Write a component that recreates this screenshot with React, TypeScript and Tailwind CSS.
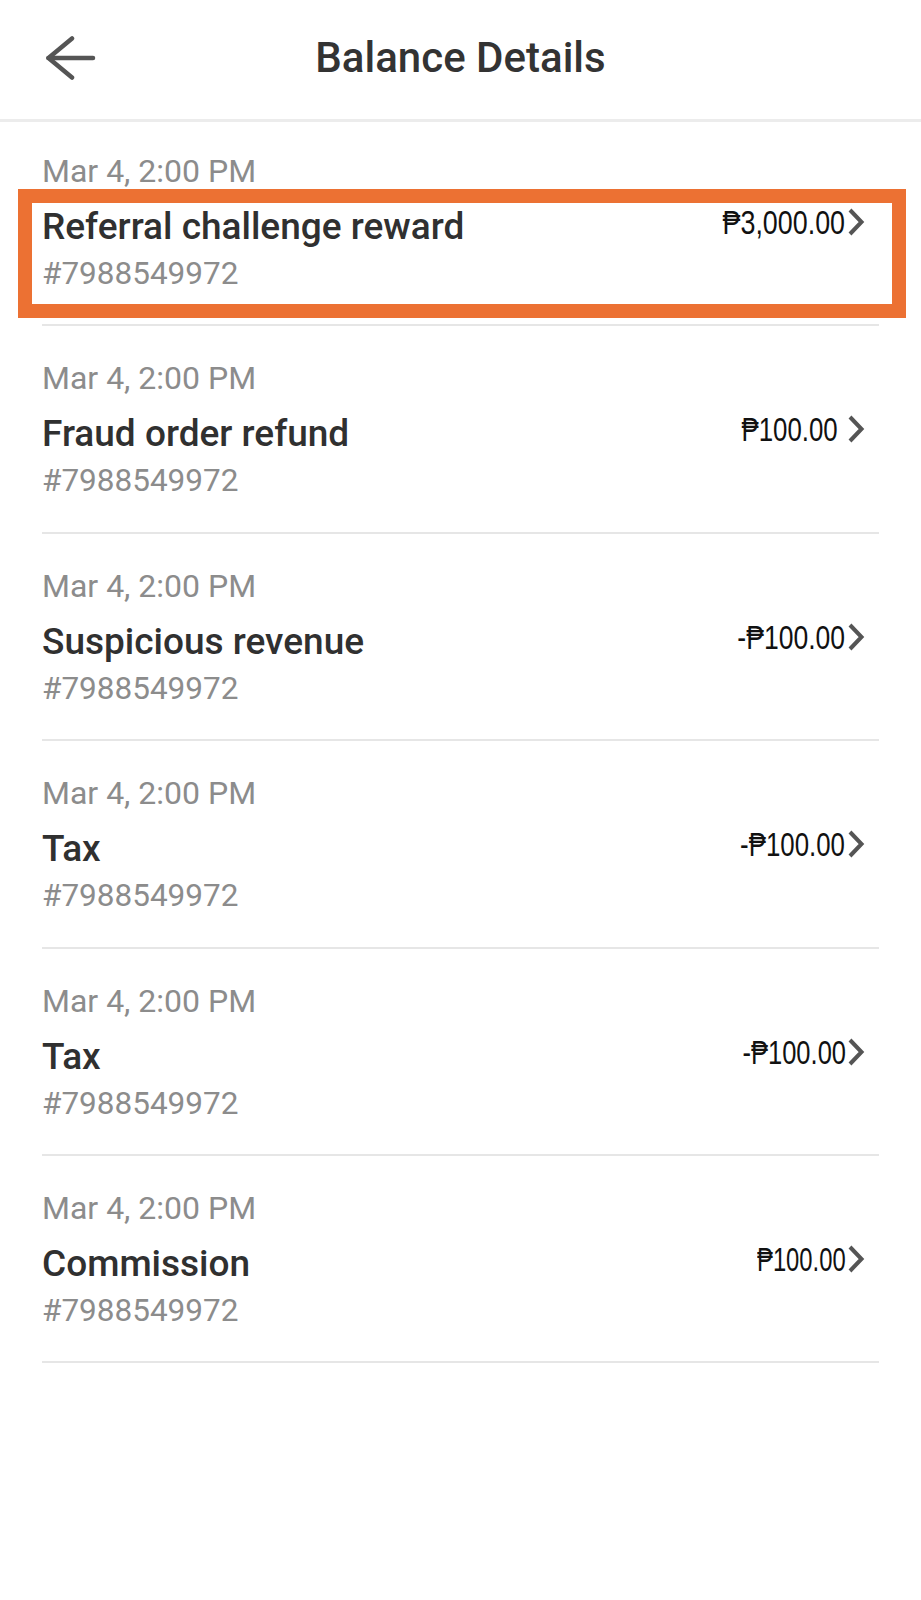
import React from 'react'

// Balance Details screen: header with back arrow, then a list of balance movements.
// The first row carries an orange highlight frame drawn over it.

type Entry = { date: string; title: string; id: string; amount: string; fit: string }

const entries: Entry[] = [
  { date: 'Mar 4, 2:00 PM', title: 'Referral challenge reward', id: '#7988549972', amount: '₱3,000.00', fit: 'scale-x-79 mr-[2px]' },
  { date: 'Mar 4, 2:00 PM', title: 'Fraud order refund', id: '#7988549972', amount: '₱100.00', fit: 'scale-x-76 mr-[9px]' },
  { date: 'Mar 4, 2:00 PM', title: 'Suspicious revenue', id: '#7988549972', amount: '-₱100.00', fit: 'scale-x-78 mr-[2px]' },
  { date: 'Mar 4, 2:00 PM', title: 'Tax', id: '#7988549972', amount: '-₱100.00', fit: 'scale-x-76 mr-[2px]' },
  { date: 'Mar 4, 2:00 PM', title: 'Tax', id: '#7988549972', amount: '-₱100.00', fit: 'scale-x-75 mr-[1px]' },
  { date: 'Mar 4, 2:00 PM', title: 'Commission', id: '#7988549972', amount: '₱100.00', fit: 'scale-x-70 mr-[1px]' },
]

const roboto = "font-['Roboto','Noto_Sans',sans-serif]"

function BackArrow() {
  return (
    <svg width="50" height="44" viewBox="0 0 50 44" fill="none" stroke="#555" strokeWidth="4.5" strokeLinecap="round" strokeLinejoin="round">
      <path d="M2.5 22H47" />
      <path d="M26 2.5L2.5 22L26 41.5" />
    </svg>
  )
}

function Chevron() {
  return (
    <svg width="18" height="28" viewBox="0 0 18 28" fill="none" stroke="#555" strokeWidth="4" strokeLinecap="butt" strokeLinejoin="miter">
      <path d="M3 2L14.5 14L3 26" />
    </svg>
  )
}

function Row({ e, first }: { e: Entry; first?: boolean }) {
  return (
    <div className="relative">
      <div className="px-[42px]">
        <div className={`${first ? 'pt-[29px]' : 'pt-[32px]'} pb-[30.4px] border-b-2 border-[#e6e6e6]`}>
          <div className="h-[40px] leading-[40px] text-[32px] text-[#8c8c8c]">{e.date}</div>
          <div className="mt-[14px] flex items-start justify-between pr-[14px]">
            <div className="h-[44px] leading-[44px] text-[37px] font-medium text-[#303030]">{e.title}</div>
            <div className="h-[34px] flex items-center">
              <span className={`inline-block origin-right font-['Liberation_Sans','DejaVu_Sans',sans-serif] text-[34px] leading-[34px] text-[#111] ${e.fit}`}>
                {e.amount}
              </span>
              <Chevron />
            </div>
          </div>
          <div className="mt-[5px] h-[40px] leading-[40px] text-[31.5px] text-[#8c8c8c]">{e.id}</div>
        </div>
      </div>
      {first && (
        <div className="pointer-events-none absolute left-[18px] right-[15px] top-[67px] h-[129px] border-[14px] border-[#ec7133]" />
      )}
    </div>
  )
}

export default function App() {
  return (
    <div className={`${roboto} w-[921px] min-h-[1600px] bg-white`}>
      <div className="h-[122px] border-b-[3px] border-[#ececec] grid grid-cols-[1fr_auto_1fr] items-center pb-1">
        <div className="pl-[46px] flex items-center"><BackArrow /></div>
        <div className="text-[42px] font-medium text-[#333] leading-none">Balance Details</div>
        <div />
      </div>
      {entries.map((e, i) => <Row key={i} e={e} first={i === 0} />)}
    </div>
  )
}
